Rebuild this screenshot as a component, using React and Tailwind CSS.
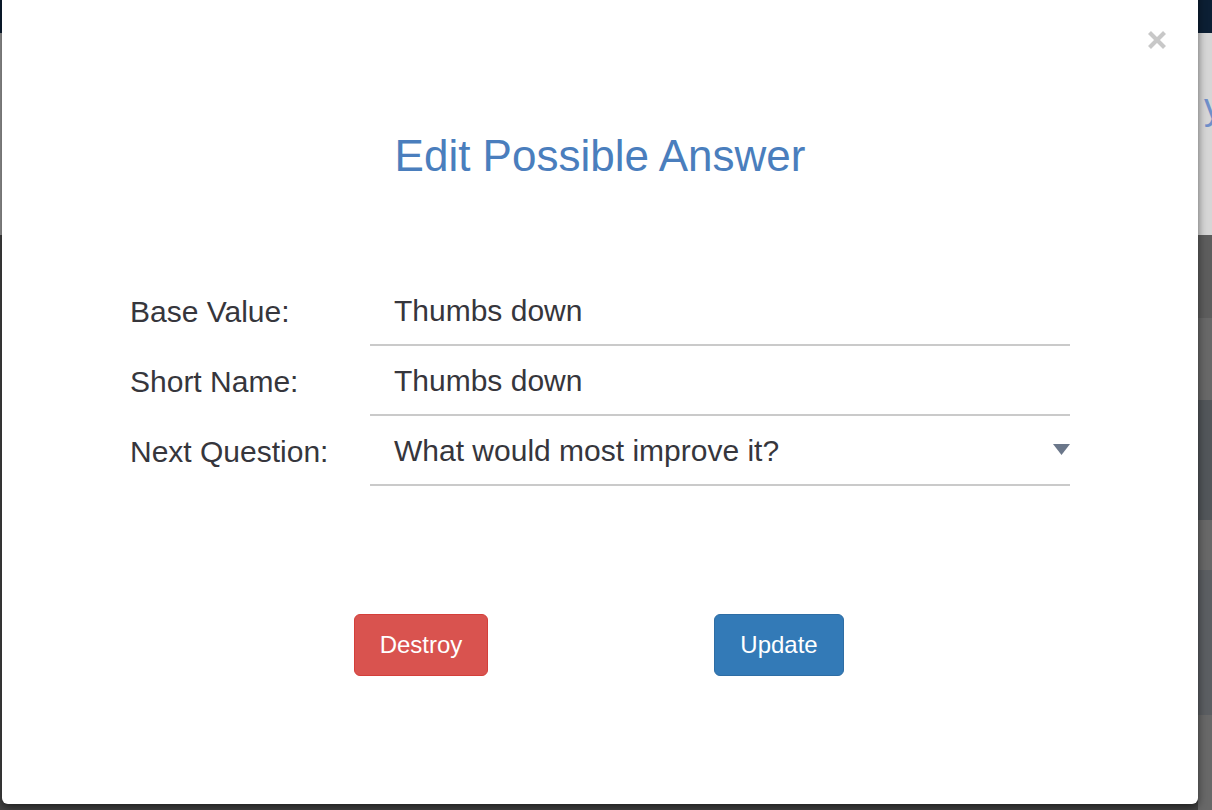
import React from "react";

const font = { fontFamily: '"Liberation Sans", Arial, Helvetica, sans-serif' };

function Row({ label, value, caret }) {
  return (
    <div className="flex items-center">
      <div className="w-[240px] text-[30px] leading-none text-[#36363c]">{label}</div>
      <div className="w-[700px] h-[68px] border-b-2 border-[#cacaca] flex items-center pl-6 text-[30px] leading-none text-[#36363c]">
        <span>{value}</span>
        {caret && (
          <svg className="ml-auto -mt-[3px]" width="17" height="11" viewBox="0 0 17 11">
            <polygon points="0,0 17,0 8.5,11" fill="#6b778a" />
          </svg>
        )}
      </div>
    </div>
  );
}

export default function App() {
  return (
    <div className="relative w-[1212px] h-[810px] overflow-hidden bg-[#444444]" style={font}>
      {/* dimmed page behind the modal */}
      <div className="flex flex-col h-full">
        <div className="h-[33px] bg-[#0c1f34]" />
        <div className="h-[202px] flex">
          <div className="flex-1 bg-[#9a9a9a]" />
          <div className="w-[14px] bg-[#d6d6d6] overflow-hidden">
            <div className="pt-[56px] pl-[6px] text-[36px] leading-none text-[#6f8fc9]">y</div>
          </div>
        </div>
        <div className="flex-1 flex">
          <div className="flex-1 bg-[#434343]" />
          <div className="w-[14px] flex flex-col">
            <div className="h-[83px] bg-[#5d5d5d]" />
            <div className="h-[82px] bg-[#686868]" />
            <div className="h-[120px] bg-[#52565a]" />
            <div className="h-[50px] bg-[#686868]" />
            <div className="h-[145px] bg-[#5b5e62]" />
            <div className="flex-1 bg-[#686868]" />
          </div>
        </div>
      </div>

      {/* modal */}
      <div className="absolute left-[2px] top-[-20px] w-[1196px] h-[824px] bg-white rounded-[6px] shadow-[0_3px_8px_rgba(0,0,0,0.55)]">
        <button className="absolute right-[31px] top-[50px] w-[20px] h-[20px]" aria-label="Close">
          <svg width="20" height="20" viewBox="0 0 20 20">
            <path d="M2.5 2.5 L17.5 17.5 M17.5 2.5 L2.5 17.5" stroke="#c8c8c8" strokeWidth="4.2" />
          </svg>
        </button>

        <div className="pt-[154px]">
          <h3 className="text-center text-[44px] leading-none text-[#4a7ebd]">Edit Possible Answer</h3>
        </div>

        <div className="mt-[100px] pl-[128px] flex flex-col gap-[2px]">
          <Row label="Base Value:" value="Thumbs down" />
          <Row label="Short Name:" value="Thumbs down" />
          <Row label="Next Question:" value="What would most improve it?" caret />
        </div>

        <div className="mt-[128px] mx-auto w-[716px] grid grid-cols-2">
          <div className="flex justify-center">
            <button className="px-[25px] py-3 text-[24px] leading-[36px] text-white bg-[#d9534f] border border-[#d43f3a] rounded-[6px]">
              Destroy
            </button>
          </div>
          <div className="flex justify-center">
            <button className="px-[25px] py-3 text-[24px] leading-[36px] text-white bg-[#337ab7] border border-[#2e6da4] rounded-[6px]">
              Update
            </button>
          </div>
        </div>
      </div>
    </div>
  );
}
